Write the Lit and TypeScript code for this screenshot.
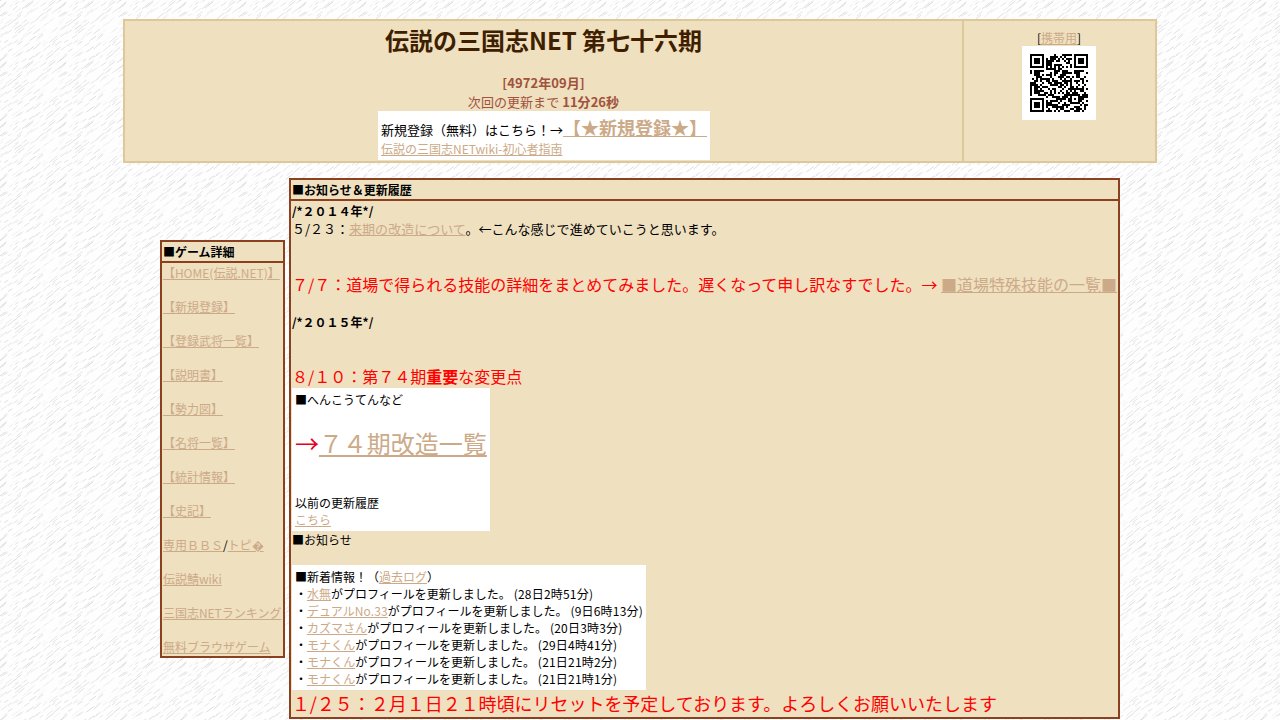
import { LitElement, html, css, svg, unsafeCSS } from "lit";
import { customElement } from "lit/decorators.js";

/* ---- QR code, version 3, one block ---- */
const SIZE = 29;

function gfMul(a: number, b: number): number {
  let r = 0;
  for (let i = 7; i >= 0; i--) {
    r = (r << 1) ^ ((r >>> 7) * 0x11d);
    r ^= ((b >>> i) & 1) * a;
  }
  return r & 255;
}

function qrMatrix(text: string, level: number, mask: number): boolean[][] {
  const dataLen = level === 1 ? 55 : 44;
  const ecLen = 70 - dataLen;
  const bits: number[] = [];
  const put = (v: number, n: number) => {
    for (let i = n - 1; i >= 0; i--) bits.push((v >>> i) & 1);
  };
  put(4, 4);
  put(text.length, 8);
  for (const ch of text) put(ch.charCodeAt(0), 8);
  put(0, Math.min(4, dataLen * 8 - bits.length));
  while (bits.length % 8) bits.push(0);
  for (let p = 0xec; bits.length < dataLen * 8; p ^= 0xec ^ 0x11) put(p, 8);

  const data: number[] = [];
  for (let i = 0; i < bits.length; i += 8) data.push(parseInt(bits.slice(i, i + 8).join(""), 2));
  const gen: number[] = new Array(ecLen).fill(0);
  gen[ecLen - 1] = 1;
  let root = 1;
  for (let i = 0; i < ecLen; i++) {
    for (let j = 0; j < ecLen; j++) {
      gen[j] = gfMul(gen[j], root);
      if (j + 1 < ecLen) gen[j] ^= gen[j + 1];
    }
    root = gfMul(root, 2);
  }
  const rem: number[] = new Array(ecLen).fill(0);
  for (const b of data) {
    const f = b ^ rem.shift()!;
    rem.push(0);
    gen.forEach((g, i) => (rem[i] ^= gfMul(g, f)));
  }
  const words = [...data, ...rem];

  const m: boolean[][] = Array.from({ length: SIZE }, () => new Array(SIZE).fill(false));
  const fixed: boolean[][] = Array.from({ length: SIZE }, () => new Array(SIZE).fill(false));
  const set = (x: number, y: number, v: boolean) => {
    if (x < 0 || y < 0 || x >= SIZE || y >= SIZE) return;
    m[y][x] = v;
    fixed[y][x] = true;
  };
  for (let i = 0; i < SIZE; i++) {
    set(6, i, i % 2 === 0);
    set(i, 6, i % 2 === 0);
  }
  for (const [cx, cy] of [[3, 3], [SIZE - 4, 3], [3, SIZE - 4]])
    for (let dy = -4; dy <= 4; dy++)
      for (let dx = -4; dx <= 4; dx++) {
        const d = Math.max(Math.abs(dx), Math.abs(dy));
        set(cx + dx, cy + dy, d !== 2 && d !== 4);
      }
  for (let dy = -2; dy <= 2; dy++)
    for (let dx = -2; dx <= 2; dx++) set(22 + dx, 22 + dy, Math.max(Math.abs(dx), Math.abs(dy)) !== 1);

  const fd = (level << 3) | mask;
  let r = fd;
  for (let i = 0; i < 10; i++) r = (r << 1) ^ ((r >>> 9) * 0x537);
  const fmt = ((fd << 10) | r) ^ 0x5412;
  const fb = (i: number) => ((fmt >>> i) & 1) === 1;
  for (let i = 0; i <= 5; i++) set(8, i, fb(i));
  set(8, 7, fb(6));
  set(8, 8, fb(7));
  set(7, 8, fb(8));
  for (let i = 9; i < 15; i++) set(14 - i, 8, fb(i));
  for (let i = 0; i < 8; i++) set(SIZE - 1 - i, 8, fb(i));
  for (let i = 8; i < 15; i++) set(8, SIZE - 15 + i, fb(i));
  set(8, SIZE - 8, true);

  const masks = [
    (x: number, y: number) => (x + y) % 2 === 0,
    (x: number, y: number) => y % 2 === 0,
    (x: number, y: number) => x % 3 === 0,
    (x: number, y: number) => (x + y) % 3 === 0,
    (x: number, y: number) => (Math.floor(x / 3) + Math.floor(y / 2)) % 2 === 0,
    (x: number, y: number) => ((x * y) % 2) + ((x * y) % 3) === 0,
    (x: number, y: number) => (((x * y) % 2) + ((x * y) % 3)) % 2 === 0,
    (x: number, y: number) => (((x + y) % 2) + ((x * y) % 3)) % 2 === 0,
  ];
  let i = 0;
  for (let right = SIZE - 1; right >= 1; right -= 2) {
    if (right === 6) right = 5;
    for (let v = 0; v < SIZE; v++)
      for (let j = 0; j < 2; j++) {
        const x = right - j;
        const y = ((right + 1) & 2) === 0 ? SIZE - 1 - v : v;
        if (fixed[y][x]) continue;
        const bit = i < words.length * 8 ? (words[i >>> 3] >>> (7 - (i & 7))) & 1 : 0;
        i++;
        m[y][x] = (bit === 1) !== masks[mask](x, y);
      }
  }
  return m;
}

const QR = qrMatrix("http://densetu.sakura.ne.jp/i-index.cgi", 0, 2);
const qrPath = QR.flatMap((row, y) => row.map((on, x) => (on ? `M${x} ${y}h1v1h-1z` : ""))).join("");

/* ---- washi paper tile: short slanted fibres ---- */
function paperTile(): string {
  let seed = 17;
  const rnd = () => (seed = (seed * 16807) % 2147483647) / 2147483647;
  const w = 60;
  const h = 60;
  let out = "";
  for (let gy = 0; gy < 15; gy++)
    for (let gx = 0; gx < 8; gx++) {
      const x = gx * 7.5 + rnd() * 7.5;
      const y = gy * 4 + rnd() * 4;
      const len = 3 + rnd() * 5;
      const slope = 0.6 + rnd() * 0.3;
      const g = Math.round(212 + rnd() * 36);
      for (const ox of [0, -w])
        for (const oy of [0, h])
          out += `<path d='M${(x + ox).toFixed(1)} ${(y + oy).toFixed(1)}l${len.toFixed(1)} ${(-len * slope).toFixed(1)}' stroke='rgb(${g},${g},${g})'/>`;
    }
  const doc = `<svg xmlns='http://www.w3.org/2000/svg' width='${w}' height='${h}'><rect width='${w}' height='${h}' fill='#fefefe'/><g stroke-width='.8' fill='none'>${out}</g></svg>`;
  return `url("data:image/svg+xml,${encodeURIComponent(doc).replace(/'/g, "%27")}")`;
}

const MENU = [
  "【HOME(伝説.NET)】", "【新規登録】", "【登録武将一覧】", "【説明書】", "【勢力図】",
  "【名将一覧】", "【統計情報】", "【史記】", "", "伝説鯖wiki", "三国志NETランキング", "無料ブラウザゲーム",
];

const NEWS: [string, string][] = [
  ["水無", "28日2時51分"],
  ["デュアルNo.33", "9日6時13分"],
  ["カズマさん", "20日3時3分"],
  ["モナくん", "29日4時41分"],
  ["モナくん", "21日21時2分"],
  ["モナくん", "21日21時1分"],
];

@customElement("app-root")
export class AppRoot extends LitElement {
  static styles = css`
    :host {
      display: block;
      box-sizing: border-box;
      height: 720px;
      overflow: hidden;
      padding-top: 19px;
      background: ${unsafeCSS(paperTile())};
      font: 12px/17px "Noto Sans CJK JP", sans-serif;
      color: #000;
      white-space: nowrap;
    }
    a { color: #ccaa88; text-decoration: underline; }
    .header {
      box-sizing: border-box;
      width: 1034px;
      height: 144px;
      margin: 0 auto;
      display: grid;
      grid-template-columns: 839px 1fr;
      border: 2px solid #dcc898;
      background: #efe0c0;
    }
    .title-cell { display: flex; flex-direction: column; align-items: center; border-right: 2px solid #dcc898; padding-top: 1px; }
    h1 { margin: 0 0 16px; font-size: 24px; line-height: 35px; color: #3f1f00; }
    .date { font-size: 13px; line-height: 19px; color: #a0523d; }
    .counter { letter-spacing: 0.05px; }
    .signup { box-sizing: border-box; width: 332px; margin-left: 1px; background: #fff; padding: 3px; }
    .signup-line { font-size: 13px; line-height: 27px; height: 26px; }
    .signup-line a { font-size: 18px; font-weight: bold; }
    .mobile { display: flex; flex-direction: column; align-items: center; padding: 8px 1px 0 0; }
    .qr { display: block; width: 58px; height: 58px; padding: 8px; background: #fff; }
    .body { display: flex; justify-content: center; align-items: center; gap: 4px; margin-top: 15px; }
    .panel { border: 2px solid #8b4020; background: #efe0c0; }
    .head { font-weight: bold; height: 17px; padding: 1px; border-bottom: 2px solid #8b4020; }
    .menu { display: flex; flex-direction: column; gap: 17px; padding: 1px; }
    .side { width: 121px; }
    .content { padding: 1px; }
    .gap1 { height: 17px; }
    .gap2 { height: 34px; }
    .mid { font-size: 13px; line-height: 19px; padding-bottom: 1px; letter-spacing: 0.02px; }
    .red { color: #f00; font-size: 16px; line-height: 23px; }
    .topic { padding-top: 1px; }
    .white { width: max-content; background: #fff; padding: 3px; }
    .big { font-size: 24px; line-height: 35px; color: #e60020; }
    .name { letter-spacing: 0.08px; }
    .time { letter-spacing: 0.2px; }
    .reset { color: #f00; font-size: 18px; line-height: 26px; letter-spacing: -0.03px; }
  `;

  render() {
    return html`
      <header class="header">
        <div class="title-cell">
          <h1>伝説の三国志NET 第七十六期</h1>
          <b class="date counter">[4972年09月]</b>
          <div class="date counter">次回の更新まで <b>11分26秒</b></div>
          <div class="signup">
            <div class="signup-line">新規登録（無料）はこちら！→<a>【★新規登録★】</a></div>
            <a>伝説の三国志NETwiki-初心者指南</a>
          </div>
        </div>
        <div class="mobile">
          <div>[<a>携帯用</a>]</div>
          <svg class="qr" viewBox="0 0 29 29" shape-rendering="crispEdges">${svg`<path d=${qrPath} />`}</svg>
        </div>
      </header>
      <div class="body">
        <nav class="panel side">
          <div class="head">■ゲーム詳細</div>
          <div class="menu">
            ${MENU.map((t) => (t ? html`<div><a>${t}</a></div>` : html`<div><a>専用ＢＢＳ</a>/<a>トピ�</a></div>`))}
          </div>
        </nav>
        <main class="panel">
          <div class="head">■お知らせ＆更新履歴</div>
          <div class="content">
            <b>/*２０１４年*/</b>
            <div class="mid">５/２３：<a>来期の改造について</a>。←こんな感じで進めていこうと思います。</div>
            <div class="gap2"></div>
            <div class="red">７/７：道場で得られる技能の詳細をまとめてみました。遅くなって申し訳なすでした。→ <a>■道場特殊技能の一覧■</a></div>
            <div class="gap1"></div>
            <b>/*２０１５年*/</b>
            <div class="gap2"></div>
            <div class="red topic">８/１０：第７４期<b>重要</b>な変更点</div>
            <div class="white">
              <div>■へんこうてんなど</div>
              <div class="gap1"></div>
              <div class="big">→<a>７４期改造一覧</a></div>
              <div class="gap2"></div>
              <div>以前の更新履歴</div>
              <a>こちら</a>
            </div>
            <div>■お知らせ</div>
            <div class="gap1"></div>
            <div class="white">
              <div>■新着情報！（<a>過去ログ</a>）</div>
              ${NEWS.map(([n, t]) => html`<div>・<a class="name">${n}</a>がプロフィールを更新しました。<span class="time"> (${t})</span></div>`)}
            </div>
            <div class="reset">１/２５：２月１日２１時頃にリセットを予定しております。よろしくお願いいたします</div>
          </div>
        </main>
      </div>
    `;
  }
}
